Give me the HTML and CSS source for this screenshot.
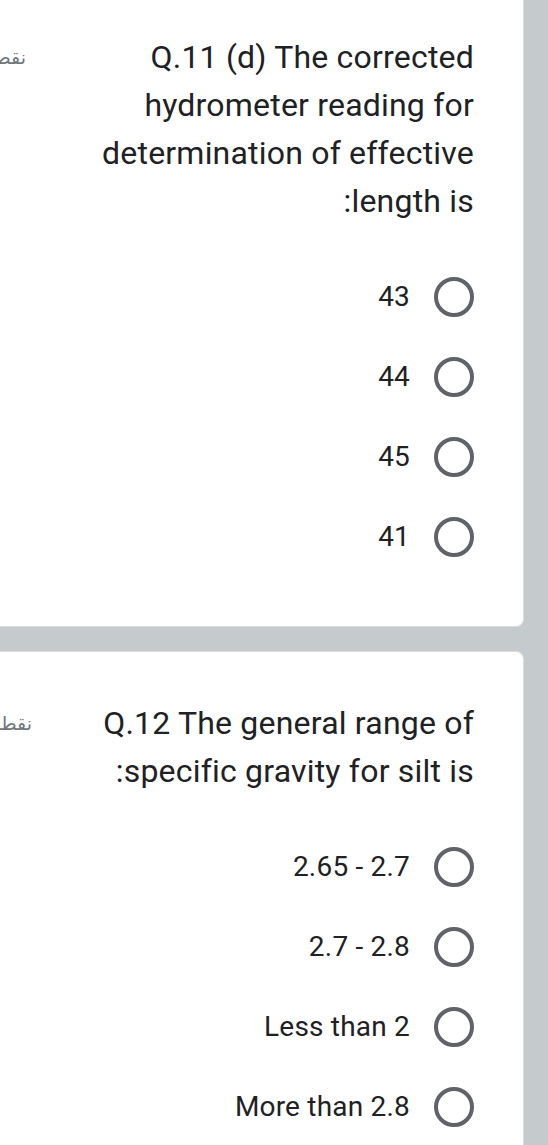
FILE: index.html
```html
<!DOCTYPE html>
<html lang="ar" dir="rtl">
<head>
<meta charset="utf-8">
<link rel="stylesheet" href="styles.css">
</head>
<body>
<div class="page">
  <div class="card card-first">
    <div class="head">
      <div class="title" dir="rtl">Q.11 (d) The corrected hydrometer reading for determination of effective length is:</div>
      <div class="points points-a">نقطة</div>
    </div>
    <div class="options">
      <div class="opt"><span class="radio"></span><span class="label">43</span></div>
      <div class="opt"><span class="radio"></span><span class="label">44</span></div>
      <div class="opt"><span class="radio"></span><span class="label">45</span></div>
      <div class="opt"><span class="radio"></span><span class="label">41</span></div>
    </div>
  </div>
  <div class="card card-second">
    <div class="head">
      <div class="title" dir="rtl">Q.12 The general range of specific gravity for silt is:</div>
      <div class="points points-b">نقطة</div>
    </div>
    <div class="options">
      <div class="opt"><span class="radio"></span><span class="label" dir="ltr">2.65 - 2.7</span></div>
      <div class="opt"><span class="radio"></span><span class="label" dir="ltr">2.7 - 2.8</span></div>
      <div class="opt"><span class="radio"></span><span class="label" dir="ltr">Less than 2</span></div>
      <div class="opt"><span class="radio"></span><span class="label" dir="ltr">More than 2.8</span></div>
    </div>
  </div>
</div>
</body>
</html>
```
FILE: styles.css
```css
html, body {
  margin: 0;
  padding: 0;
  background: #c5cbcd;
  overflow: hidden;
}
body {
  width: 548px;
  height: 1145px;
  font-family: Roboto, "Liberation Sans", sans-serif;
  color: #202124;
}
.page {
  display: flex;
  flex-direction: column;
  gap: 24px;
  padding-right: 24px;
  margin-left: -10px;
}
.card {
  background: #ffffff;
  border: 1px solid #dadce0;
  padding: 0 49px 49px 0;
}
.card-first {
  border-top: none;
  border-radius: 0 0 8px 0;
  padding-top: 33px;
}
.card-second {
  border-radius: 0 8px 0 0;
  border-bottom: none;
  padding-top: 47px;
  height: 600px;
}
.head {
  display: flex;
  flex-direction: row;
  justify-content: space-between;
  align-items: flex-start;
  gap: 20px;
}
.title {
  font-size: 32px;
  line-height: 48px;
  letter-spacing: 0.2px;
  width: 400px;
  text-align: right;
}
.points {
  font-family: "DejaVu Sans", sans-serif;
  font-size: 19px;
  line-height: 48px;
  color: #70757a;
  white-space: nowrap;
  width: 40px;
  flex: none;
  text-align: right;
}
.points-a { margin-left: -5px; }
.points-b { margin-left: 1px; }
.options {
  display: flex;
  flex-direction: column;
  margin-top: 32px;
}
.opt {
  height: 80px;
  display: flex;
  flex-direction: row;
  align-items: center;
  gap: 24px;
}
.radio {
  width: 32px;
  height: 32px;
  border: 4px solid #5f6368;
  border-radius: 50%;
  flex: none;
}
.label {
  font-size: 28px;
  line-height: 32px;
  letter-spacing: 0.2px;
}
```
